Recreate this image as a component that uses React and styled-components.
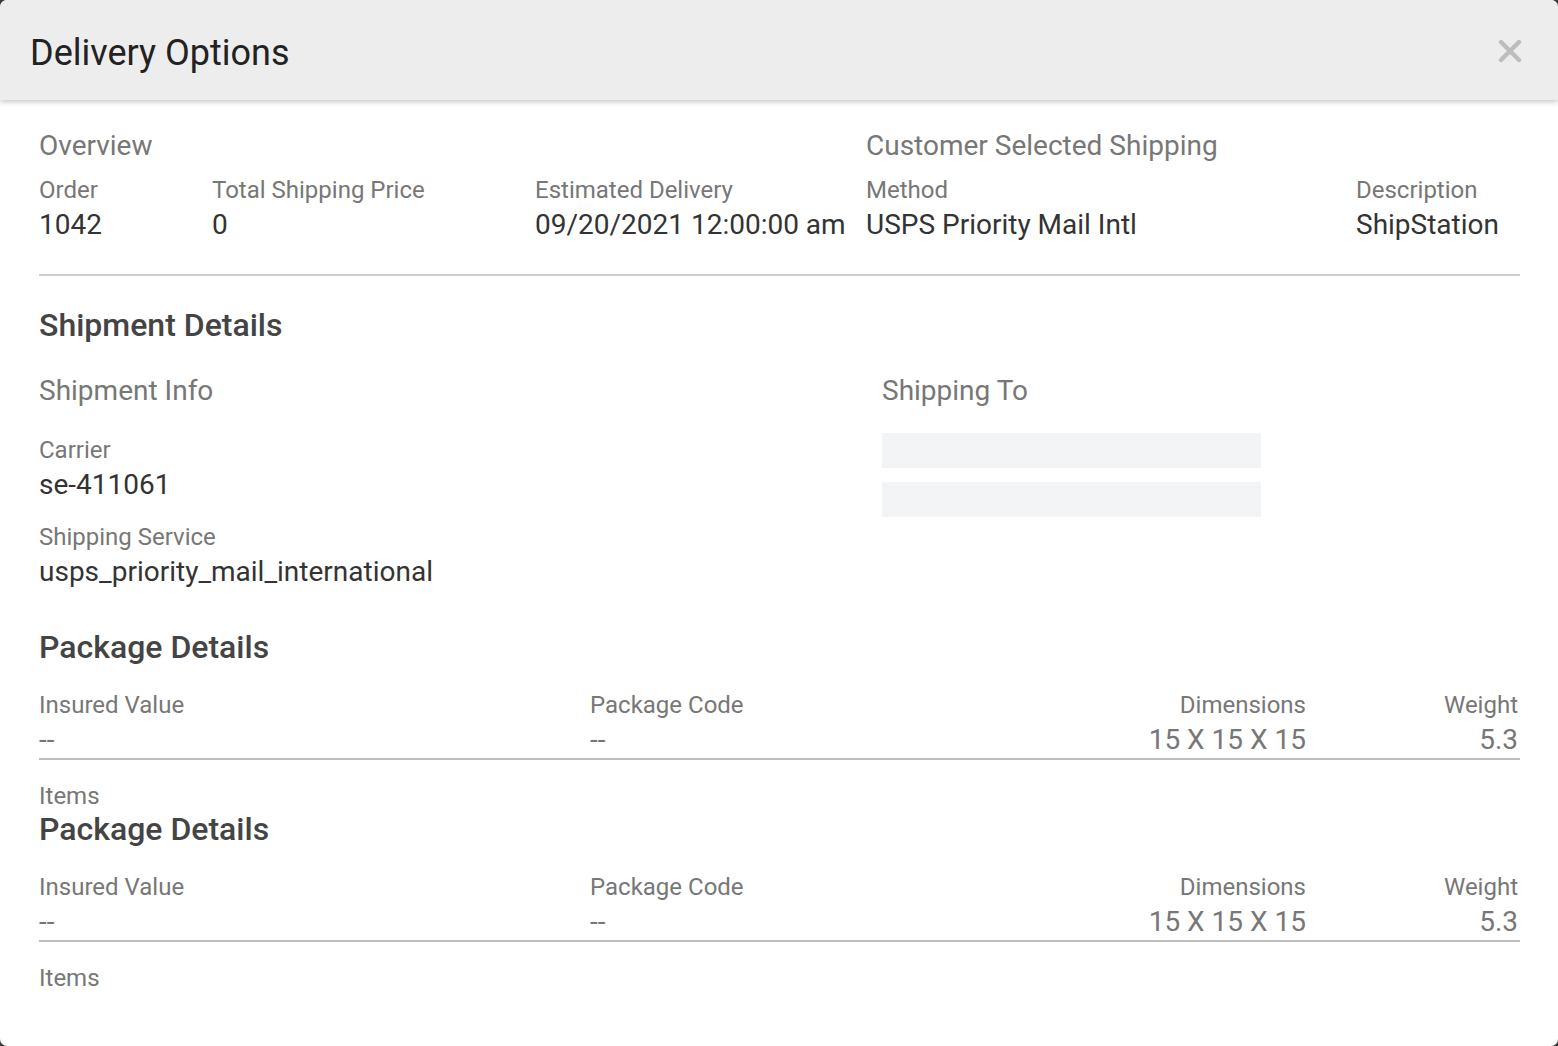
import React from "react";
import styled, { createGlobalStyle } from "styled-components";

const GlobalStyle = createGlobalStyle`
    html, body {
        margin: 0;
        padding: 0;
        background: #3a3a3a;
    }
    * {
        box-sizing: border-box;
    }
    body {
        font-family: Roboto, "Liberation Sans", Arial, sans-serif;
    }
`;

const packages = [
    { insured: "--", code: "--", dimensions: "15 X 15 X 15", weight: "5.3" },
    { insured: "--", code: "--", dimensions: "15 X 15 X 15", weight: "5.3" },
];

function CloseIcon() {
    return (
        <svg width="24" height="24" viewBox="0 0 24 24">
            <path
                d="M3 3 L21 21 M21 3 L3 21"
                stroke="#bdbdbd"
                strokeWidth="4.4"
                strokeLinecap="round"
                fill="none"
            />
        </svg>
    );
}

function Field({ label, value }) {
    return (
        <div>
            <StLabel>{label}</StLabel>
            <StValue>{value}</StValue>
        </div>
    );
}

function PackageDetails({ pkg }) {
    return (
        <StPackage>
            <StHeading>Package Details</StHeading>
            <StPackageRow>
                <div>
                    <StLabel>Insured Value</StLabel>
                    <StPackageValue>{pkg.insured}</StPackageValue>
                </div>
                <div>
                    <StLabel>Package Code</StLabel>
                    <StPackageValue>{pkg.code}</StPackageValue>
                </div>
                <StRightCell>
                    <StLabel>Dimensions</StLabel>
                    <StPackageValue>{pkg.dimensions}</StPackageValue>
                </StRightCell>
                <StRightCell>
                    <StLabel>Weight</StLabel>
                    <StPackageValue>{pkg.weight}</StPackageValue>
                </StRightCell>
            </StPackageRow>
            <StItems>Items</StItems>
        </StPackage>
    );
}

export default function App() {
    return (
        <>
            <GlobalStyle />
            <StModal>
                <StHeader>
                    <StTitle>Delivery Options</StTitle>
                    <StClose aria-label="Close">
                        <CloseIcon />
                    </StClose>
                </StHeader>
                <StBody>
                    <StOverview>
                        <StGroup $width="827px">
                            <StSubTitle>Overview</StSubTitle>
                            <StFields $cols="173px 323px auto">
                                <Field label="Order" value="1042" />
                                <Field label="Total Shipping Price" value="0" />
                                <Field label="Estimated Delivery" value="09/20/2021 12:00:00 am" />
                            </StFields>
                        </StGroup>
                        <StGroup>
                            <StSubTitle>Customer Selected Shipping</StSubTitle>
                            <StFields $cols="490px auto">
                                <Field label="Method" value="USPS Priority Mail Intl" />
                                <Field label="Description" value="ShipStation" />
                            </StFields>
                        </StGroup>
                    </StOverview>

                    <StDivider />

                    <StHeading>Shipment Details</StHeading>
                    <StShipment>
                        <div>
                            <StSubTitle>Shipment Info</StSubTitle>
                            <StStack>
                                <Field label="Carrier" value="se-411061" />
                                <Field label="Shipping Service" value="usps_priority_mail_international" />
                            </StStack>
                        </div>
                        <div>
                            <StSubTitle>Shipping To</StSubTitle>
                            <StPlaceholders>
                                <StPlaceholder />
                                <StPlaceholder />
                            </StPlaceholders>
                        </div>
                    </StShipment>

                    {packages.map((pkg, i) => (
                        <PackageDetails key={i} pkg={pkg} />
                    ))}
                </StBody>
            </StModal>
        </>
    );
}

const StModal = styled.div`
    width: 100%;
    height: 100vh;
    background: #fff;
    border-radius: 7px;
    overflow: hidden;
    display: flex;
    flex-direction: column;
`;

const StHeader = styled.div`
    height: 100px;
    flex-shrink: 0;
    background: #ededed;
    display: flex;
    align-items: center;
    justify-content: space-between;
    padding: 2px 36px 0 30px;
    box-shadow: 0 2px 5px rgba(0, 0, 0, 0.22);
    position: relative;
    z-index: 1;
`;

const StTitle = styled.h1`
    margin: 3px 0 0;
    font-size: 36px;
    font-weight: 400;
    color: #222;
`;

const StClose = styled.button`
    border: none;
    background: none;
    padding: 0;
    display: flex;
    cursor: pointer;
`;

const StBody = styled.div`
    padding: 28px 38px 0 39px;
`;

const StOverview = styled.div`
    display: flex;
`;

const StGroup = styled.div`
    width: ${(p) => p.$width || "auto"};
    flex: ${(p) => (p.$width ? "none" : "1")};
`;

const StSubTitle = styled.div`
    font-size: 28px;
    line-height: 36px;
    color: #777;
`;

const StFields = styled.div`
    display: grid;
    grid-template-columns: ${(p) => p.$cols};
    margin-top: 11px;
`;

const StLabel = styled.div`
    font-size: 24px;
    line-height: 30px;
    color: #777;
`;

const StValue = styled.div`
    font-size: 28px;
    line-height: 36px;
    color: #333;
    margin-top: 2px;
`;

const StDivider = styled.hr`
    margin: 31px 0 0;
    border: none;
    border-top: 2px solid #cfcfcf;
`;

const StHeading = styled.h2`
    margin: 31px 0 0;
    font-size: 32px;
    line-height: 36px;
    font-weight: 500;
    color: #444;
`;

const StShipment = styled.div`
    display: grid;
    grid-template-columns: 843px 1fr;
    margin-top: 30px;
`;

const StStack = styled.div`
    display: flex;
    flex-direction: column;
    gap: 19px;
    margin-top: 26px;
`;

const StPlaceholders = styled.div`
    display: flex;
    flex-direction: column;
    gap: 14px;
    margin-top: 24px;
`;

const StPlaceholder = styled.div`
    width: 379px;
    height: 35px;
    background: #f3f4f5;
`;

const StPackage = styled.div`
    margin-top: 39px;
    & + & {
        margin-top: 0;
    }
    & ${StHeading} {
        margin-top: 0;
    }
`;

const StPackageRow = styled.div`
    display: grid;
    grid-template-columns: 551px 1fr 202px 212px;
    margin-top: 25px;
    border-bottom: 2px solid #bdbdbd;
`;

const StRightCell = styled.div`
    text-align: right;
    padding-right: 2px;
`;

const StPackageValue = styled.div`
    font-size: 28px;
    line-height: 36px;
    color: #777;
    margin-top: 2px;
`;

const StItems = styled.div`
    margin-top: 21px;
    font-size: 24px;
    line-height: 30px;
    color: #777;
`;
